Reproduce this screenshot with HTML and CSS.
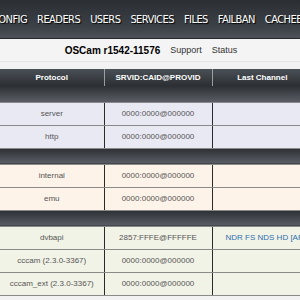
FILE: index.html
```html
<!DOCTYPE html>
<html lang="en">
<head>
  <meta charset="UTF-8">
  <title>OSCam r1542-11576</title>
  <link rel="stylesheet" href="styles.css">
</head>
<body>
  <!-- Main menu -->
  <div class="menu">
    <a href="#">CONFIG</a>
    <a href="#">READERS</a>
    <a href="#">USERS</a>
    <a href="#">SERVICES</a>
    <a href="#">FILES</a>
    <a href="#">FAILBAN</a>
    <a href="#">CACHEEX</a>
  </div>

  <!-- Version bar -->
  <div class="version">
    <b>OSCam r1542-11576</b>
    <a href="#">Support</a>
    <a href="#">Status</a>
  </div>

  <!-- Status table -->
  <table class="status">
    <thead>
      <tr>
        <th class="c1">Protocol</th>
        <th class="c2">SRVID:CAID@PROVID</th>
        <th class="c3">Last Channel</th>
      </tr>
    </thead>
    <tbody>
      <tr class="group"><td colspan="3"></td></tr>
      <tr class="s"><td>server</td><td>0000:0000@000000</td><td></td></tr>
      <tr class="s"><td>http</td><td>0000:0000@000000</td><td></td></tr>

      <tr class="group"><td colspan="3"></td></tr>
      <tr class="h"><td>internal</td><td>0000:0000@000000</td><td></td></tr>
      <tr class="h"><td>emu</td><td>0000:0000@000000</td><td></td></tr>

      <tr class="group"><td colspan="3"></td></tr>
      <tr class="c"><td>dvbapi</td><td>2857:FFFE@FFFFFE</td><td class="chan">NDR FS NDS HD [ARD]</td></tr>
      <tr class="c"><td>cccam (2.3.0-3367)</td><td>0000:0000@000000</td><td></td></tr>
      <tr class="c"><td>cccam_ext (2.3.0-3367)</td><td>0000:0000@000000</td><td></td></tr>
    </tbody>
  </table>
</body>
</html>
```

FILE: styles.css
```css
/* Global */
* {
  margin: 0;
  padding: 0;
  box-sizing: border-box;
}

body {
  font-family: 'Liberation Sans', Arial, sans-serif;
  background: #f2f2f2;
  overflow: hidden;
  width: 300px;
  height: 300px;
}

/* Menu */
.menu {
  height: 39px;
  display: flex;
  align-items: center;
  gap: 10px;
  margin-left: -8px;
  white-space: nowrap;
  background: linear-gradient(#2b2f34, #3c4147 70%, #4d5258);
  border-bottom: 1px solid #25282c;
}

.menu a {
  color: #ffffff;
  text-decoration: none;
  font-family: 'DejaVu Sans Condensed', 'Liberation Sans Narrow', 'Liberation Sans', sans-serif;
  font-size: 11px;
  letter-spacing: -0.55px;
  text-shadow: 1px 1px 1px #000;
}

/* Version bar */
.version {
  height: 23px;
  display: flex;
  align-items: center;
  justify-content: center;
  gap: 10px;
  padding-left: 2px;
  background: #f4f4f4;
  border-bottom: 1px solid #e4e4e4;
  margin-bottom: 7px;
}

.version b {
  font-size: 10px;
  color: #000;
}

.version a {
  font-size: 9px;
  color: #333;
  text-decoration: none;
}

/* Table */
.status {
  width: 312px;
  border-collapse: collapse;
  table-layout: fixed;
}

.status th {
  height: 17px;
  font-size: 8px;
  color: #fff;
  background: linear-gradient(#4b5056, #2b2f34);
  border-left: 1px solid #9a9da2;
}

.status th.c1 {
  width: 104px;
  border-left: none;
}

.status th.c2 {
  width: 108px;
}

.status tr.group td {
  height: 16px;
  background: linear-gradient(#2c3035, #5a5e64);
}

.status td {
  height: 23px;
  text-align: center;
  font-size: 8px;
  color: #555;
  border-left: 1px solid #2a2a2a;
  border-bottom: 1px solid #8a8a8a;
}

.status td:first-child {
  border-left: none;
}

.status tr.s td { background: #e9e9f3; }
.status tr.h td { background: #fdf3e8; }
.status tr.c td { background: #f2f3e7; }

.status td.chan {
  color: #2f6fae;
  text-align: left;
  padding-left: 13px;
}
```
